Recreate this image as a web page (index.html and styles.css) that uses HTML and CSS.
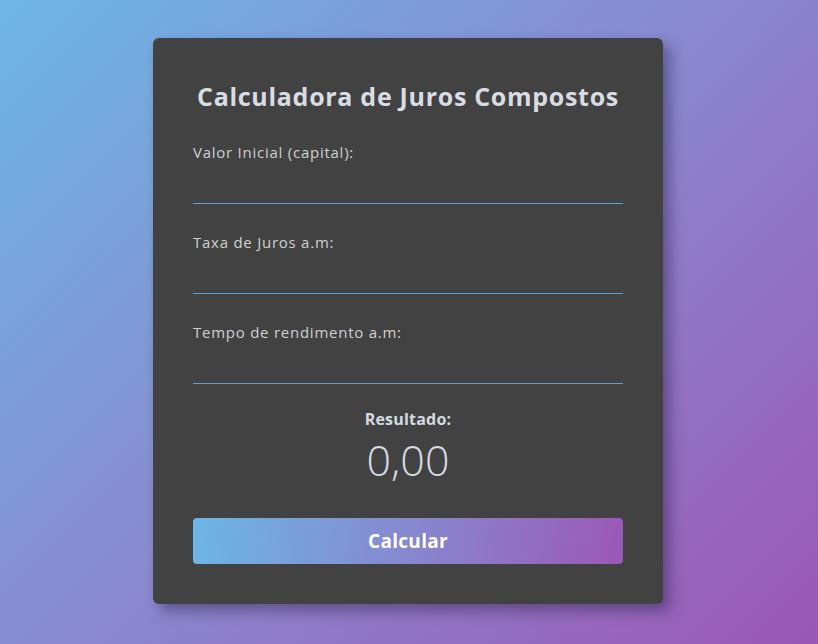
FILE: index.html
```html
<!DOCTYPE html>
<html lang="pt-BR">
<head>
<meta charset="utf-8">
<title>Calculadora de Juros Compostos</title>
<link rel="stylesheet" href="styles.css">
</head>
<body>
<main class="card">
  <h1 class="title">Calculadora de Juros Compostos</h1>
  <div class="field">
    <label class="label" for="capital">Valor Inicial (capital):</label>
    <div class="input-wrap"><input class="input" id="capital" type="text"></div>
  </div>
  <div class="field">
    <label class="label" for="taxa">Taxa de Juros a.m:</label>
    <div class="input-wrap"><input class="input" id="taxa" type="text"></div>
  </div>
  <div class="field">
    <label class="label" for="tempo">Tempo de rendimento a.m:</label>
    <div class="input-wrap"><input class="input" id="tempo" type="text"></div>
  </div>
  <div class="result">
    <div class="result-label">Resultado:</div>
    <div class="result-value">0,00</div>
  </div>
  <button class="button" type="button">Calcular</button>
</main>
</body>
</html>
```

FILE: styles.css
```css
* { box-sizing: border-box; }
html, body { height: 100%; }
body {
  margin: 0;
  padding-top: 38px;
  font-family: "Open Sans", "Noto Sans", sans-serif;
  background: linear-gradient(135deg, #6cb7e5 0%, #8a88cf 50%, #9b57b4 100%);
  display: flex;
  align-items: flex-start;
  justify-content: center;
}
.card {
  width: 510px;
  height: 566px;
  margin-right: 2px;
  background: #424242;
  border-radius: 6px;
  padding: 40px;
  box-shadow: 7px 7px 14px rgba(40, 30, 70, 0.45);
  display: flex;
  flex-direction: column;
}
.title {
  margin: 0 0 28px;
  height: 36px;
  font-size: 25px;
  line-height: 36px;
  font-weight: 700;
  letter-spacing: 0.7px;
  color: #d9dde3;
  text-align: center;
}
.field {
  display: flex;
  flex-direction: column;
  margin-bottom: 28px;
}
.label {
  display: block;
  height: 21px;
  font-size: 15px;
  line-height: 21px;
  letter-spacing: 0.75px;
  color: #d0d0d0;
}
.input-wrap {
  height: 40px;
  border-bottom: 1px solid #5ba0d2;
  box-sizing: content-box;
}
.input {
  display: block;
  width: 100%;
  height: 40px;
  border: none;
  padding: 0;
  background: transparent;
  outline: none;
  color: #e0e0e0;
  font: inherit;
}
.result {
  margin-top: -4px;
  text-align: center;
  color: #d6dae0;
}
.result-label {
  font-size: 16px;
  line-height: 22px;
  font-weight: 700;
  letter-spacing: 0.2px;
}
.result-value {
  font-size: 43px;
  line-height: 56px;
  font-weight: 300;
  margin-top: 2px;
}
.button {
  margin-top: 30px;
  height: 46px;
  flex: none;
  border: none;
  border-radius: 4px;
  background: linear-gradient(100deg, #6cb6e6 0%, #8788cf 50%, #9b58b6 100%);
  color: #ffffff;
  font-family: inherit;
  font-size: 19px;
  font-weight: 700;
  letter-spacing: 0.3px;
}
```
